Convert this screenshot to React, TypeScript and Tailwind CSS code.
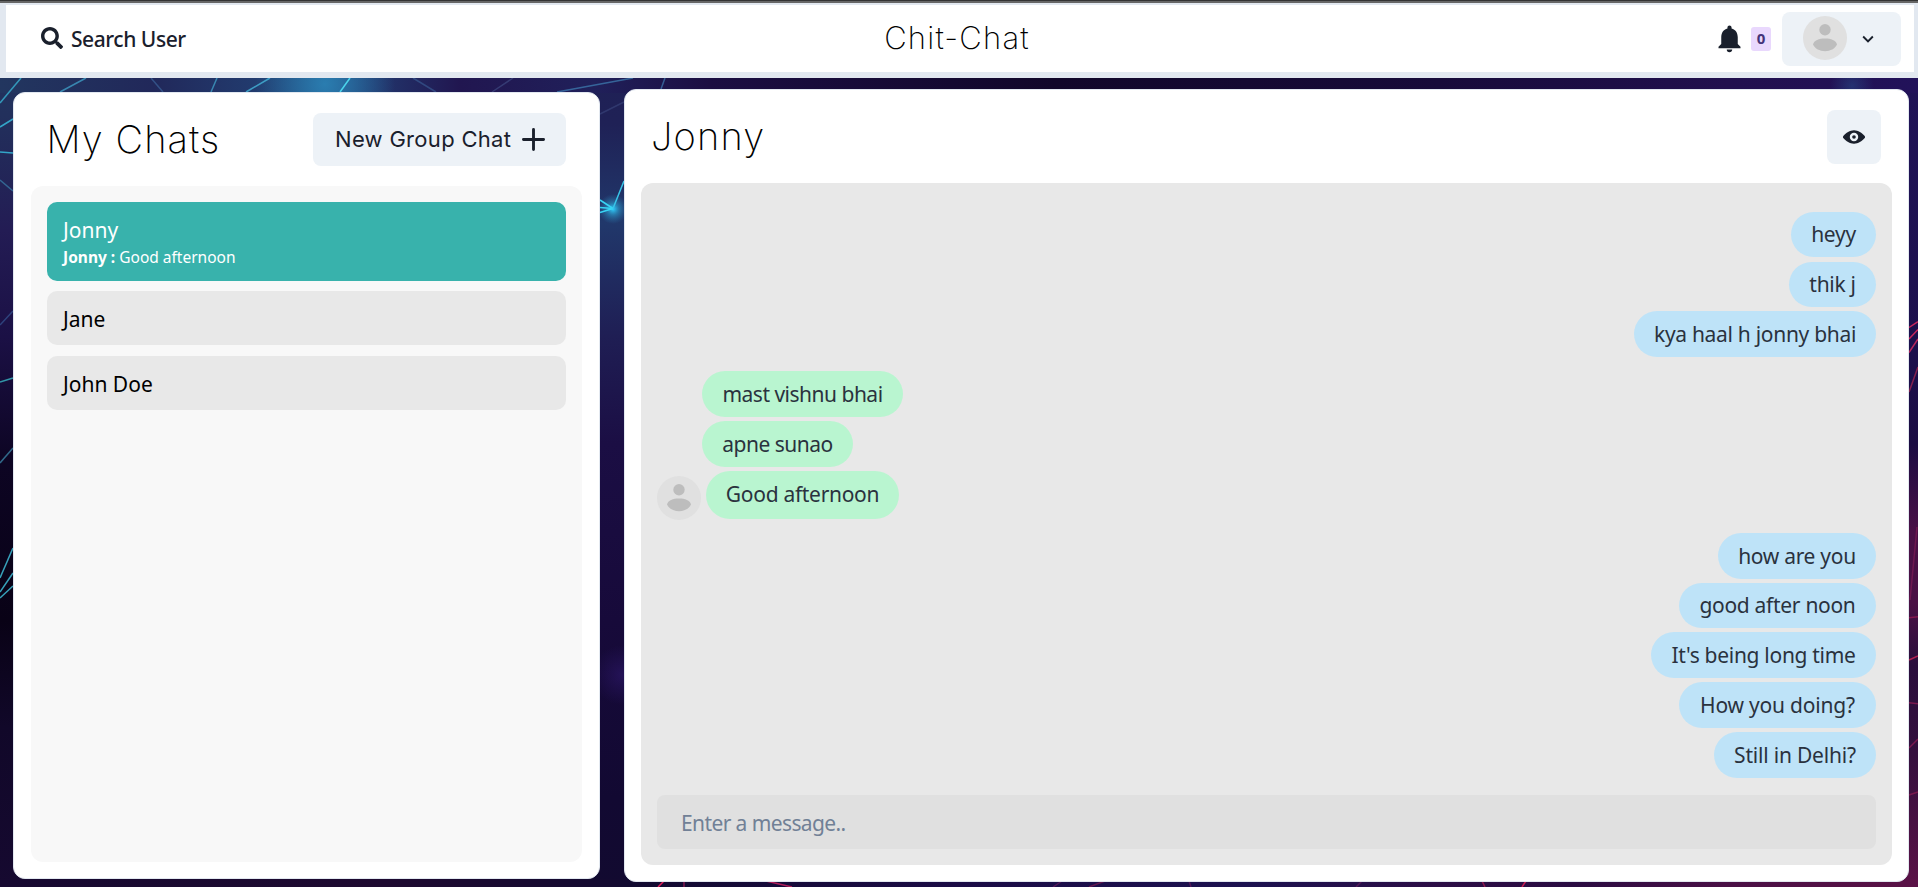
import { FaSearch } from "react-icons/fa";

type Line = [number, number, number, number, string, number];

const lines: Line[] = [
  [0, 103, 21, 78, "#35a3c4", 0.9],
  [0, 127, 13, 119, "#35b3d4", 0.9],
  [0, 152, 13, 153, "#35b3d4", 0.9],
  [0, 180, 13, 191, "#3a82ac", 0.7],
  [0, 325, 13, 311, "#3a62a0", 0.6],
  [0, 382, 13, 378, "#35a3b4", 0.9],
  [0, 463, 13, 448, "#3a82a4", 0.8],
  [0, 578, 13, 548, "#3cb3cc", 0.9],
  [0, 592, 13, 573, "#3cb3cc", 0.9],
  [0, 598, 13, 586, "#3cb3cc", 0.9],
  [60, 92, 86, 78, "#3f9cc4", 0.8],
  [151, 78, 163, 92, "#3f6ca4", 0.6],
  [211, 92, 217, 78, "#3f9cc4", 0.8],
  [246, 92, 270, 78, "#45b4d8", 0.8],
  [340, 92, 350, 78, "#4fe0f4", 0.9],
  [413, 78, 436, 92, "#3f6ca4", 0.5],
  [492, 92, 513, 78, "#4a5c94", 0.5],
  [557, 92, 633, 78, "#3d7cb0", 0.75],
  [600, 114, 624, 102, "#4a5c94", 0.4],
  [661, 89, 665, 78, "#3f7cb4", 0.7],
  [600, 200, 613, 208.5, "#38d4f4", 1],
  [600, 207.5, 613, 208.5, "#38d4f4", 1],
  [600, 212.5, 613, 208.5, "#38d4f4", 1],
  [613, 208.5, 624, 181, "#38c4e8", 1],
  [1909, 327.5, 1918, 321.5, "#c8265c", 1],
  [1909, 339, 1918, 329.5, "#c8265c", 1],
  [1909, 352.5, 1918, 339, "#b8265c", 1],
  [1909, 392, 1918, 367, "#84204e", 1],
  [1910, 600, 1917, 527, "#6e1850", 1],
  [1909, 617.7, 1918, 616.7, "#84184e", 1],
  [1909, 660, 1918, 656, "#b02050", 1],
  [1909, 702.7, 1918, 703.7, "#7a184e", 1],
  [1909, 748, 1918, 739, "#7a184e", 1],
  [1909, 795, 1918, 792, "#7a184e", 1],
  [658, 887, 664, 881, "#e01e5a", 1],
  [684, 881, 684, 887, "#80184e", 1],
  [766, 881, 792, 887, "#b01e5a", 1],
  [1053, 887, 1062, 881, "#58185a", 0.9],
  [1089, 887, 1105, 881, "#6a1850", 0.9],
  [1189, 881, 1191, 887, "#58185a", 0.9],
  [1356, 887, 1362, 881, "#58185a", 0.9],
  [1482, 881, 1485, 887, "#98184e", 0.9],
  [1522, 887, 1526, 881, "#c81e50", 1],
];

function Gradient({ id, stops, across }: { id: string; stops: [number, string][]; across?: boolean }) {
  return (
    <linearGradient id={id} x1="0" y1="0" x2={across ? "1" : "0"} y2={across ? "0" : "1"}>
      {stops.map(([o, c]) => (
        <stop key={o} offset={o} stopColor={c} />
      ))}
    </linearGradient>
  );
}

function NetworkBackdrop() {
  return (
    <svg className="absolute inset-0 h-full w-full" viewBox="0 0 1918 887" preserveAspectRatio="none" aria-hidden="true">
      <defs>
        <Gradient id="leftSide" stops={[[0, "#22365f"], [0.13, "#22305c"], [0.26, "#231c54"], [0.38, "#1b1045"], [0.52, "#0d0523"], [0.7, "#090216"], [0.82, "#110829"], [1, "#160930"]]} />
        <Gradient id="gutter" stops={[[0, "#1f1f55"], [0.14, "#1f2156"], [0.25, "#21386b"], [0.38, "#1f1e54"], [0.5, "#1b0e44"], [0.7, "#170a3a"], [0.9, "#120932"], [1, "#120a30"]]} />
        <Gradient id="rightSide" stops={[[0, "#21145a"], [0.4, "#1c104c"], [0.5, "#1b0c42"], [0.6, "#4a1046"], [0.68, "#4a1044"], [0.75, "#2a0e3c"], [0.85, "#35103e"], [1, "#5a1246"]]} />
        <Gradient across id="topEdge" stops={[[0, "#22365f"], [0.08, "#21285a"], [0.17, "#22487c"], [0.24, "#211650"], [0.31, "#20205a"], [0.37, "#1b0e42"], [0.55, "#11072a"], [0.75, "#170b3a"], [0.9, "#21104e"], [1, "#22125a"]]} />
        <Gradient across id="bottomEdge" stops={[[0, "#160930"], [0.2, "#1e0a30"], [0.33, "#120a30"], [0.5, "#1b0c46"], [0.65, "#1c1250"], [0.75, "#2c0e46"], [0.82, "#2a0c42"], [0.9, "#4a1046"], [1, "#5a1246"]]} />
        <radialGradient id="cyanGlow">
          <stop offset="0" stopColor="#2fd0ff" />
          <stop offset="0.4" stopColor="#2b9fd0" stopOpacity="0.6" />
          <stop offset="1" stopColor="#2b7cb0" stopOpacity="0" />
        </radialGradient>
        <radialGradient id="blueGlow">
          <stop offset="0" stopColor="#2a7db0" />
          <stop offset="1" stopColor="#2a7db0" stopOpacity="0" />
        </radialGradient>
        <radialGradient id="violetGlow">
          <stop offset="0" stopColor="#2a1664" stopOpacity="0.7" />
          <stop offset="1" stopColor="#2a1664" stopOpacity="0" />
        </radialGradient>
      </defs>
      <rect width="320" height="887" fill="url(#leftSide)" />
      <rect x="320" width="900" height="887" fill="url(#gutter)" />
      <rect x="1220" width="698" height="887" fill="url(#rightSide)" />
      <rect width="1918" height="93" fill="url(#topEdge)" />
      <rect y="879" width="1918" height="8" fill="url(#bottomEdge)" />
      <circle cx="325" cy="84" r="70" fill="url(#blueGlow)" />
      <circle cx="1852" cy="86" r="22" fill="url(#blueGlow)" opacity="0.3" />
      <circle cx="613" cy="209" r="15" fill="url(#cyanGlow)" />
      <circle cx="622" cy="675" r="30" fill="url(#violetGlow)" />
      {lines.map(([x1, y1, x2, y2, color, opacity], i) => (
        <line key={i} x1={x1} y1={y1} x2={x2} y2={y2} stroke={color} strokeOpacity={opacity} strokeWidth="1.5" />
      ))}
    </svg>
  );
}

function Avatar() {
  return (
    <svg className="h-11 w-11 shrink-0" viewBox="0 0 44 44" aria-hidden="true">
      <circle cx="22" cy="22" r="22" fill="#e0e0e0" />
      <circle cx="22" cy="13.7" r="5.7" fill="#bdbdbd" />
      <path d="M10 28.6C11 24.4 16 22.6 22 22.6S33 24.4 34 28.6C32 32.8 27.5 35.2 22 35.2S12 32.8 10 28.6Z" fill="#bdbdbd" />
    </svg>
  );
}

function BellIcon() {
  return (
    <svg className="h-[33px] w-[33px]" viewBox="0 0 24 24" fill="#1a202c" aria-hidden="true">
      <path d="M12 22c1.1 0 2-.9 2-2h-4a2 2 0 0 0 2 2zm6-6v-5c0-3.07-1.64-5.64-4.5-6.32V4c0-.83-.67-1.5-1.5-1.5s-1.5.67-1.5 1.5v.68C7.63 5.36 6 7.92 6 11v5l-2 2v1h16v-1l-2-2z" />
    </svg>
  );
}

function ChevronIcon() {
  return (
    <svg className="h-[22px] w-[22px]" viewBox="0 0 24 24" fill="#1a202c" aria-hidden="true">
      <path d="M16.59 8.59L12 13.17 7.41 8.59 6 10l6 6 6-6z" />
    </svg>
  );
}

function AddIcon() {
  return (
    <svg className="h-[23px] w-[23px]" viewBox="0 0 24 24" fill="#1a202c" aria-hidden="true">
      <path d="M0,12a1.5,1.5,0,0,0,1.5,1.5h8.75a.25.25,0,0,1,.25.25V22.5a1.5,1.5,0,0,0,3,0V13.75a.25.25,0,0,1,.25-.25H22.5a1.5,1.5,0,0,0,0-3H13.75a.25.25,0,0,1-.25-.25V1.5a1.5,1.5,0,0,0-3,0v8.75a.25.25,0,0,1-.25.25H1.5A1.5,1.5,0,0,0,0,12Z" />
    </svg>
  );
}

function ViewIcon() {
  return (
    <svg className="h-[22px] w-[22px]" viewBox="0 0 24 24" fill="#1a202c" aria-hidden="true">
      <path d="M23.432,10.524C20.787,7.614,16.4,4.538,12,4.6,7.6,4.537,3.213,7.615.568,10.524a2.211,2.211,0,0,0,0,2.948C3.182,16.351,7.507,19.4,11.839,19.4h.308c4.347,0,8.671-3.049,11.288-5.929A2.21,2.21,0,0,0,23.432,10.524ZM7.4,12A4.6,4.6,0,1,1,12,16.6,4.6,4.6,0,0,1,7.4,12Z" />
      <circle cx="12" cy="12" r="2" />
    </svg>
  );
}

interface Message {
  text: string;
  mine: boolean;
  size: string;
  gap: string;
  avatar?: boolean;
}

const messages: Message[] = [
  { text: "heyy", mine: true, size: "w-[85px] h-[45px] tracking-[-0.3px]", gap: "mt-0" },
  { text: "thik j", mine: true, size: "w-[87px] h-[45px] tracking-[-0.3px]", gap: "mt-[5px]" },
  { text: "kya haal h jonny bhai", mine: true, size: "w-[242px] h-[46px] tracking-[-0.3px]", gap: "mt-1" },
  { text: "mast vishnu bhai", mine: false, size: "w-[201px] h-[46px] tracking-[-0.5px]", gap: "mt-3.5" },
  { text: "apne sunao", mine: false, size: "w-[151px] h-[46px] tracking-[-0.5px]", gap: "mt-1" },
  { text: "Good afternoon", mine: false, size: "w-[193px] h-[48px] tracking-[-0.3px]", gap: "mt-1", avatar: true },
  { text: "how are you", mine: true, size: "w-[158px] h-[46px] tracking-[-0.3px]", gap: "mt-3.5" },
  { text: "good after noon", mine: true, size: "w-[197px] h-[45px] tracking-[-0.3px]", gap: "mt-1" },
  { text: "It's being long time", mine: true, size: "w-[225px] h-[46px] tracking-[-0.3px]", gap: "mt-1" },
  { text: "How you doing?", mine: true, size: "w-[197px] h-[46px] tracking-[-0.2px]", gap: "mt-1" },
  { text: "Still in Delhi?", mine: true, size: "w-[162px] h-[46px] tracking-[-0.2px]", gap: "mt-1" },
];

function MessageRow({ message }: { message: Message }) {
  const { text, mine, size, gap, avatar } = message;
  const side = mine ? "justify-end" : avatar ? "justify-start" : "justify-start pl-[45px]";
  return (
    <div className={`flex items-end ${side} ${gap}`}>
      {avatar && (
        <span className="mr-[5px] -mb-px">
          <Avatar />
        </span>
      )}
      <span
        className={`flex items-center justify-center whitespace-nowrap rounded-3xl text-[21px] text-[#2a323e] ${avatar ? "pb-px" : "pt-px"} ${size} ${mine ? "bg-[#bee3f8]" : "bg-[#b9f5d0]"}`}
      >
        {text}
      </span>
    </div>
  );
}

export default function App() {
  return (
    <div className="relative flex h-[887px] w-full flex-col overflow-hidden font-['Noto_Sans',sans-serif] text-[#1a202c]">
      <NetworkBackdrop />
      <div className="relative h-[3px] shrink-0 border-t border-[#333333] bg-[#666666]" />
      <header className="relative flex h-[75px] shrink-0 items-center justify-between border-t-2 border-r-4 border-b-6 border-l-6 border-[#e2e8f0] bg-white pr-[13px] pl-[35px]">
        <button className="flex w-[572px] items-center gap-2 pb-0.5">
          <FaSearch className="h-[22px] w-[22px]" />
          <span className="pt-[3px] text-[21px] leading-7 font-medium tracking-[-0.45px]">Search User</span>
        </button>
        <h1 className="pb-px font-['Inter'] text-[31px] font-extralight tracking-[1.2px] text-black">Chit-Chat</h1>
        <div className="flex w-[600px] items-center justify-end">
          <BellIcon />
          <span className="mr-[11px] ml-[5px] flex h-6 w-5 items-center justify-center rounded-[3px] bg-[#e9d8fd] text-[15px] font-bold text-[#44337a]">0</span>
          <button className="flex h-[54px] w-[119px] items-center rounded-lg bg-[#edf2f7] pb-px pl-[21px]">
            <Avatar />
            <span className="ml-[10px] pt-px">
              <ChevronIcon />
            </span>
          </button>
        </div>
      </header>

      <main className="relative flex min-h-0 flex-1 justify-between pr-[9px] pl-[13px]">
        <aside className="mt-3.5 flex h-[787px] w-[587px] flex-col rounded-xl border border-[#e2e8f0] bg-white px-[17px] pt-5">
          <div className="flex h-[53px] items-center justify-between pr-4 pl-[15.5px]">
            <h2 className="pb-px font-['Inter'] text-[38px] leading-none font-extralight tracking-[1.1px] text-black">My Chats</h2>
            <button className="flex h-[53px] w-[253px] items-center justify-between rounded-lg bg-[#edf2f7] pr-[21px] pl-[22px] font-['Inter'] text-[22px] font-normal tracking-[0.3px]">
              New Group Chat
              <AddIcon />
            </button>
          </div>
          <div className="mt-5 flex h-[676px] flex-col rounded-xl bg-[#f8f8f8] px-4 pt-4">
            <div className="flex h-[79px] flex-col rounded-[10px] bg-[#38b2ac] px-4 pt-[13px] text-white">
              <span className="text-[21px] leading-[30px]">Jonny</span>
              <span className="text-[15.5px] leading-6">
                <b>Jonny : </b>Good afternoon
              </span>
            </div>
            <div className="mt-[10px] flex h-[54px] items-center rounded-[10px] bg-[#e8e8e8] px-4 pt-[3px] text-[21px] text-black">Jane</div>
            <div className="mt-[11px] flex h-[54px] items-center rounded-[10px] bg-[#e8e8e8] px-4 pt-[3px] text-[21px] text-black">John Doe</div>
          </div>
        </aside>

        <section className="mt-[11px] flex h-[793px] w-[1285px] flex-col rounded-xl border border-[#e2e8f0] bg-white px-4 pt-5">
          <div className="flex h-[54px] items-center justify-between pr-[11px] pl-[10px]">
            <h2 className="pb-0.5 font-['Inter'] text-[38px] leading-none font-extralight tracking-[1.2px] text-black">Jonny</h2>
            <button className="flex h-[54px] w-[54px] items-center justify-center rounded-lg bg-[#edf2f7]">
              <ViewIcon />
            </button>
          </div>
          <div className="mt-[19px] flex h-[682px] flex-col justify-end rounded-xl bg-[#e8e8e8] px-4 pb-4">
            {messages.map((m) => (
              <MessageRow key={m.text} message={m} />
            ))}
            <input
              className="mt-[17px] h-[54px] w-full rounded-lg bg-[#e0e0e0] px-6 pt-0.5 text-[21px] tracking-[-0.6px] outline-none placeholder:text-[#718096]"
              placeholder="Enter a message.."
            />
          </div>
        </section>
      </main>
    </div>
  );
}
